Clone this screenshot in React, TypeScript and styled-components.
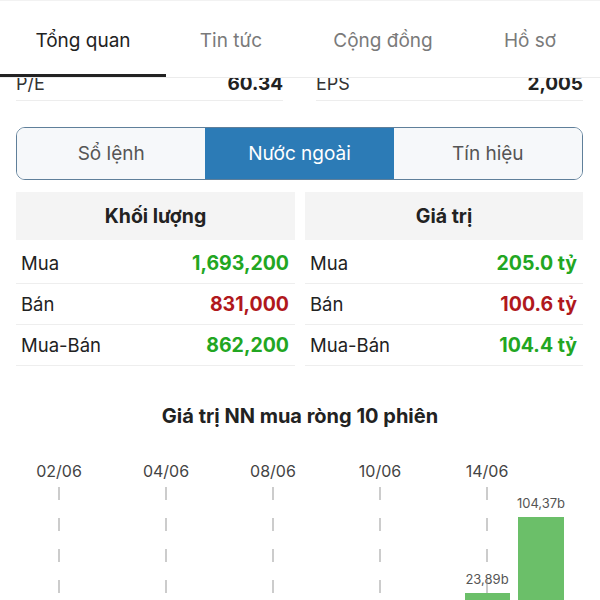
import React from "react";
import styled, { createGlobalStyle } from "styled-components";

const Global = createGlobalStyle`
  html, body { margin: 0; padding: 0; background: #fff; }
  body { font-family: Inter, "Noto Sans", "Liberation Sans", sans-serif; -webkit-font-smoothing: antialiased; }
  * { box-sizing: border-box; }
`;

const Page = styled.div`
  width: 600px;
  height: 600px;
  overflow: hidden;
  background: #fff;
  display: flex;
  flex-direction: column;
  & > * { flex-shrink: 0; }
`;

const TabBar = styled.div`
  position: relative;
  z-index: 2;
  height: 77px;
  display: flex;
  background: #fff;
  border-top: 1px solid #f2f2f2;
  box-shadow: 0 1px 0 #ececec;
`;

const Tab = styled.div<{ $w: number; $active?: boolean }>`
  width: ${(p) => p.$w}px;
  display: flex;
  align-items: center;
  justify-content: center;
  padding-top: 6px;
  font-size: 19px;
  color: ${(p) => (p.$active ? "#222" : "#7a7a7a")};
  border-bottom: 3px solid ${(p) => (p.$active ? "#222" : "transparent")};
`;

const StatsRow = styled.div`
  height: 24px;
  display: flex;
  gap: 33px;
  padding: 0 17px 0 16px;
  overflow: hidden;
`;

const StatCell = styled.div`
  flex: 1;
  display: flex;
  justify-content: space-between;
  align-items: flex-end;
  padding-bottom: 7px;
  border-bottom: 1px solid #ededed;
  line-height: 18px;
  font-size: 18px;
`;

const StatLabel = styled.span`
  color: #333;
`;

const StatValue = styled.span`
  color: #222;
  font-weight: 700;
  font-size: 19px;
`;

const Segmented = styled.div`
  margin: 26px 17px 0 16px;
  height: 53px;
  display: flex;
  border: 1.5px solid #5f7f9a;
  border-radius: 9px;
  overflow: hidden;
`;

const Segment = styled.div<{ $active?: boolean }>`
  flex: 1;
  display: flex;
  align-items: center;
  justify-content: center;
  font-size: 19px;
  background: ${(p) => (p.$active ? "#2c7bb6" : "#f6f8fa")};
  color: ${(p) => (p.$active ? "#fff" : "#555")};
`;

const Tables = styled.div`
  margin: 12px 17px 0 16px;
  display: grid;
  grid-template-columns: 279px 278px;
  column-gap: 10px;
`;

const Column = styled.div`
  display: flex;
  flex-direction: column;
`;

const HeaderCell = styled.div`
  height: 48px;
  margin-bottom: 3px;
  background: #f4f4f4;
  display: flex;
  align-items: center;
  justify-content: center;
  font-size: 19.5px;
  font-weight: 700;
  color: #222;
`;

const DataRow = styled.div`
  height: 41px;
  display: flex;
  align-items: center;
  justify-content: space-between;
  padding: 0 6px 0 5px;
  border-bottom: 1px solid #eeeeee;
`;

const RowLabel = styled.span`
  color: #222;
  font-size: 18.5px;
`;

const RowValue = styled.span<{ $tone: "up" | "down" }>`
  font-weight: 700;
  font-size: 19.5px;
  color: ${(p) => (p.$tone === "up" ? "#22a622" : "#b0181c")};
`;

const ChartTitle = styled.div`
  margin-top: 38px;
  text-align: center;
  font-size: 20px;
  font-weight: 700;
  color: #222;
`;

const ChartBox = styled.div`
  margin-top: 13px;
  height: 170px;
`;

type Row = { label: string; value: string; tone: "up" | "down" };

const volRows: Row[] = [
  { label: "Mua", value: "1,693,200", tone: "up" },
  { label: "Bán", value: "831,000", tone: "down" },
  { label: "Mua-Bán", value: "862,200", tone: "up" },
];

const valRows: Row[] = [
  { label: "Mua", value: "205.0 tỷ", tone: "up" },
  { label: "Bán", value: "100.6 tỷ", tone: "down" },
  { label: "Mua-Bán", value: "104.4 tỷ", tone: "up" },
];

const dates = [
  { x: 59, t: "02/06" },
  { x: 166, t: "04/06" },
  { x: 273, t: "08/06" },
  { x: 380, t: "10/06" },
  { x: 487, t: "14/06" },
];

const font = "Inter, 'Liberation Sans', sans-serif";

const Chart = () => (
  <svg width="600" height="170" viewBox="0 0 600 170">
    <rect x="465" y="152" width="45" height="20" fill="#6bbf69" />
    <rect x="518" y="76" width="46" height="100" fill="#6bbf69" />
    <text x="541" y="67" textAnchor="middle" fontSize="13" fill="#555" fontFamily={font}>
      104,37b
    </text>
    <text x="487" y="143" textAnchor="middle" fontSize="13" fill="#555" fontFamily={font}>
      23,89b
    </text>
    {dates.map((d) => (
      <g key={d.t}>
        <text x={d.x} y="36" textAnchor="middle" fontSize="16" fill="#444" fontFamily={font}>
          {d.t}
        </text>
        <line x1={d.x} x2={d.x} y1="46" y2="170" stroke="#999" strokeWidth="1" strokeDasharray="13 18" />
      </g>
    ))}
  </svg>
);

const Table = ({ title, rows }: { title: string; rows: Row[] }) => (
  <Column>
    <HeaderCell>{title}</HeaderCell>
    {rows.map((r) => (
      <DataRow key={r.label}>
        <RowLabel>{r.label}</RowLabel>
        <RowValue $tone={r.tone}>{r.value}</RowValue>
      </DataRow>
    ))}
  </Column>
);

export default function App() {
  return (
    <Page>
      <Global />
      <TabBar>
        <Tab $w={166} $active>Tổng quan</Tab>
        <Tab $w={130}>Tin tức</Tab>
        <Tab $w={174}>Cộng đồng</Tab>
        <Tab $w={120}>Hồ sơ</Tab>
      </TabBar>
      <StatsRow>
        <StatCell>
          <StatLabel>P/E</StatLabel>
          <StatValue>60.34</StatValue>
        </StatCell>
        <StatCell>
          <StatLabel>EPS</StatLabel>
          <StatValue>2,005</StatValue>
        </StatCell>
      </StatsRow>
      <Segmented>
        <Segment>Sổ lệnh</Segment>
        <Segment $active>Nước ngoài</Segment>
        <Segment>Tín hiệu</Segment>
      </Segmented>
      <Tables>
        <Table title="Khối lượng" rows={volRows} />
        <Table title="Giá trị" rows={valRows} />
      </Tables>
      <ChartTitle>Giá trị NN mua ròng 10 phiên</ChartTitle>
      <ChartBox>
        <Chart />
      </ChartBox>
    </Page>
  );
}
